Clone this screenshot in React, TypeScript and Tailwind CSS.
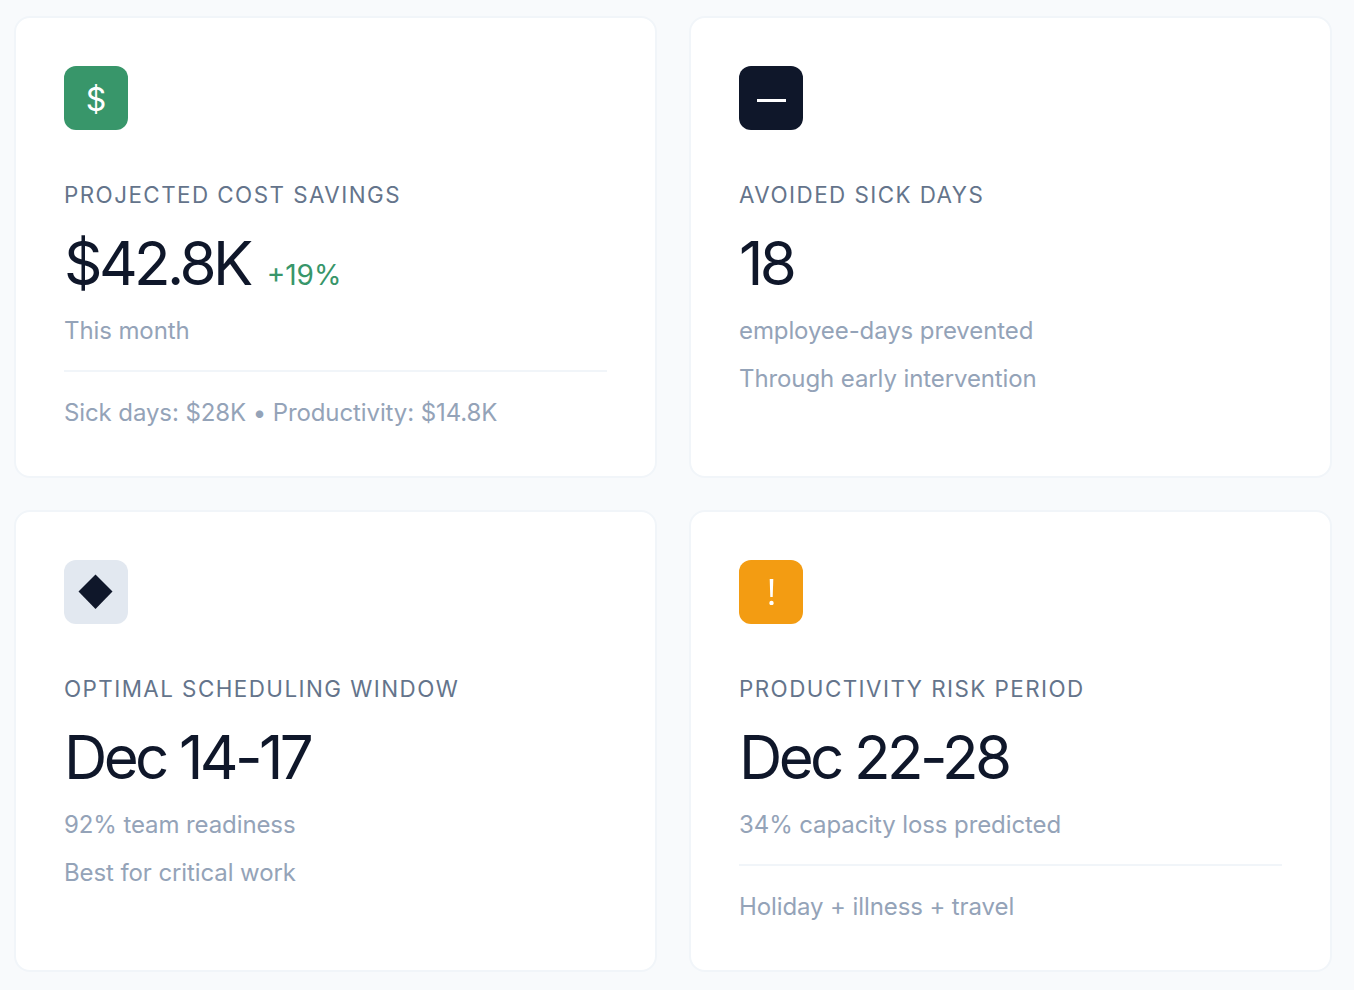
const inter = "font-['Inter',sans-serif]"

function DollarIcon() {
  return <span className="mt-[3px] text-[32px] leading-none text-white">$</span>
}

function MinusIcon() {
  return <div className="mt-1 h-[3px] w-[29px] bg-white" />
}

function DiamondIcon() {
  return (
    <svg width="36" height="36" viewBox="0 0 36 36">
      <path d="M17.5 0.5 L34.5 17.5 L17.5 35 L0.5 17.5 Z" fill="#0f172a" />
    </svg>
  )
}

function AlertIcon() {
  return (
    <svg width="8" height="26" viewBox="0 0 8 26">
      <path d="M2.7 0 H6.3 L5.7 18 H3.3 Z" fill="#fff" />
      <circle cx="4.5" cy="24" r="2.2" fill="#fff" />
    </svg>
  )
}

interface CardProps {
  icon: React.ReactNode
  iconClass: string
  label: string
  value: string
  delta?: string
  sub: string
  note: string
  divider?: boolean
}

function Card({ icon, iconClass, label, value, delta, sub, note, divider }: CardProps) {
  return (
    <div className="h-[462px] rounded-2xl border-2 border-[#f1f5f9] bg-white px-12 pt-12">
      <div className={`flex h-16 w-16 items-center justify-center rounded-xl ${iconClass}`}>{icon}</div>
      <div className="mt-[48px] text-[22.4px] leading-[34px] tracking-[1.45px] text-[#64748b]">{label}</div>
      <div className="mt-[15px] flex items-baseline gap-[17px]">
        <span className="text-[60px] leading-[72px] tracking-[-3.6px] text-[#0f172a]">{value}</span>
        {delta && <span className="text-[28px] leading-[36px] text-[#38966a]">{delta}</span>}
      </div>
      <div className="mt-[14px] text-[24px] leading-[36px] tracking-[-0.1px] text-[#94a3b8]">{sub}</div>
      {divider ? (
        <div className="mt-[21px] border-t-2 border-[#f1f5f9] pt-[23px] text-[24px] leading-[36px] tracking-[-0.1px] text-[#94a3b8]">
          {note}
        </div>
      ) : (
        <div className="mt-3 text-[24px] leading-[36px] tracking-[-0.1px] text-[#94a3b8]">{note}</div>
      )}
    </div>
  )
}

export default function App() {
  return (
    <div className={`min-h-[990px] bg-[#f8fafc] pl-[14px] pr-[22px] pt-4 ${inter}`}>
      <div className="grid grid-cols-2 gap-8">
        <Card
          icon={<DollarIcon />}
          iconClass="bg-[#38966a]"
          label="PROJECTED COST SAVINGS"
          value="$42.8K"
          delta="+19%"
          sub="This month"
          note="Sick days: $28K • Productivity: $14.8K"
          divider
        />
        <Card
          icon={<MinusIcon />}
          iconClass="bg-[#0f172a]"
          label="AVOIDED SICK DAYS"
          value="18"
          sub="employee-days prevented"
          note="Through early intervention"
        />
        <Card
          icon={<DiamondIcon />}
          iconClass="bg-[#e2e8f0]"
          label="OPTIMAL SCHEDULING WINDOW"
          value="Dec 14-17"
          sub="92% team readiness"
          note="Best for critical work"
        />
        <Card
          icon={<AlertIcon />}
          iconClass="bg-[#f39c12]"
          label="PRODUCTIVITY RISK PERIOD"
          value="Dec 22-28"
          sub="34% capacity loss predicted"
          note="Holiday + illness + travel"
          divider
        />
      </div>
    </div>
  )
}
